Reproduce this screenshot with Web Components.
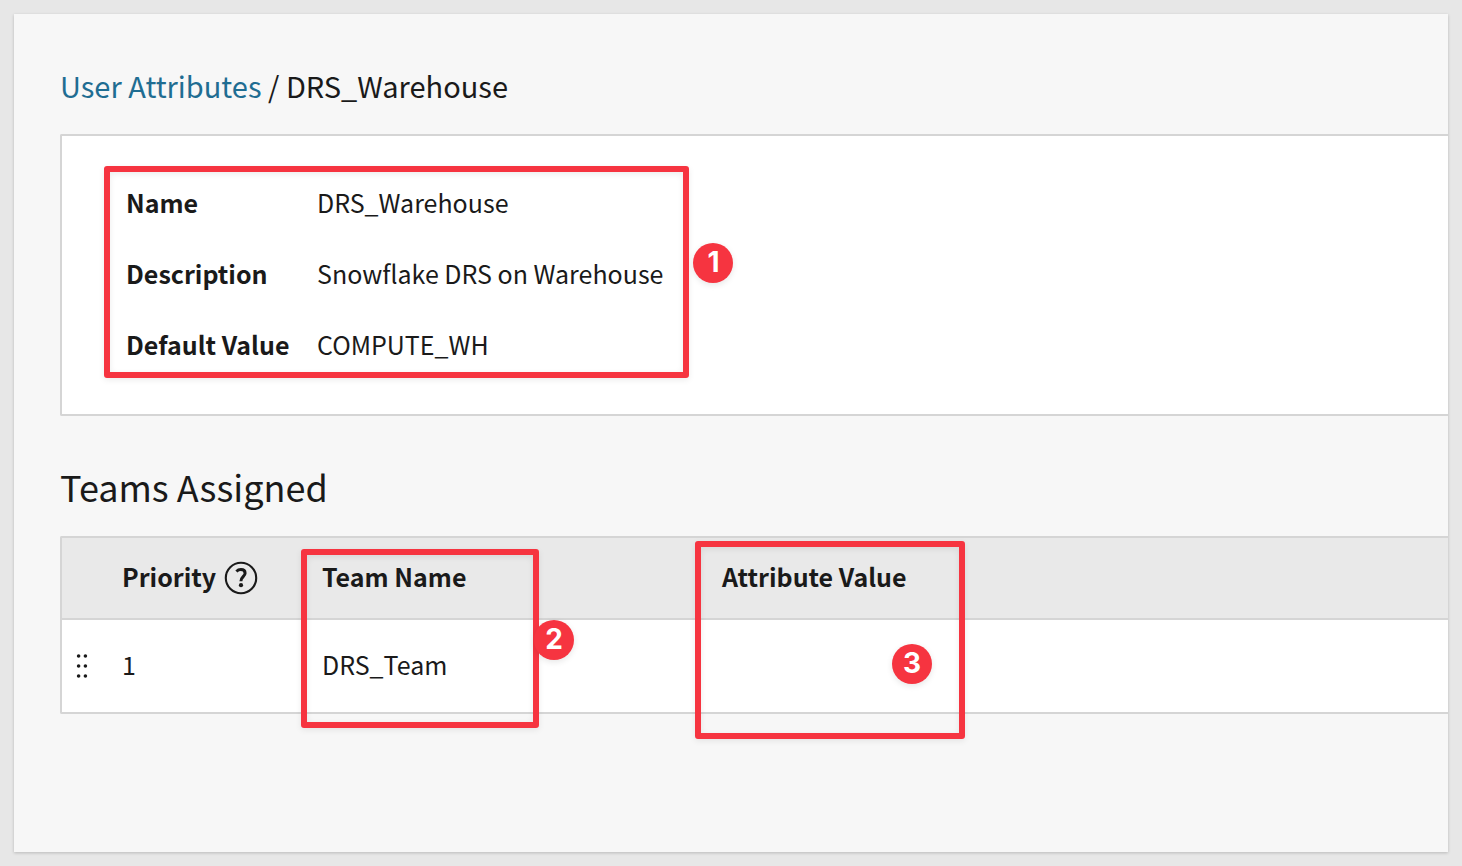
<!DOCTYPE html>
<html lang="en">
<head>
<meta charset="utf-8">
<meta name="viewport" content="width=device-width, initial-scale=1">
<title>User Attributes / DRS_Warehouse</title>
<style>
  body {
    margin: 0;
    background: #e7e7e7;
    color: #1a1a1a;
    font-family: "Noto Sans CJK SC", "Open Sans", sans-serif;
    font-size: 25px;
    line-height: 32px;
  }
</style>
</head>
<body>
<attribute-page>
  <crumb-trail slot="trail" href="#attributes" parent="User Attributes">DRS_Warehouse</crumb-trail>
  <attribute-details>
    <attribute-field label="Name">DRS_Warehouse</attribute-field>
    <attribute-field label="Description">Snowflake DRS on Warehouse</attribute-field>
    <attribute-field label="Default Value">COMPUTE_WH</attribute-field>
  </attribute-details>
  <teams-assigned></teams-assigned>
</attribute-page>

<script>
  function define(name, html, setup) {
    customElements.define(name, class extends HTMLElement {
      constructor() {
        super();
        const template = document.createElement("template");
        template.innerHTML = html;
        this.attachShadow({ mode: "open" }).append(template.content.cloneNode(true));
      }
      connectedCallback() {
        if (setup) setup(this, this.shadowRoot);
      }
    });
  }

  define("attribute-page", `
    <style>
      :host { display: flex; flex-direction: column; box-sizing: border-box; min-height: 100vh; padding: 14px; }
      main {
        flex: 1;
        padding: 51px 0 54px 46px;
        background: #f7f7f7;
        box-shadow: 0 1px 3px rgba(0, 0, 0, .2);
      }
    </style>
    <main><slot name="trail"></slot><slot></slot></main>
  `);

  define("crumb-trail", `
    <style>
      :host { display: block; font-size: 29px; line-height: 40px; }
      a { color: #1f6d92; text-decoration: none; }
    </style>
    <nav aria-label="Breadcrumb"><a></a> / <slot></slot></nav>
  `, (host, root) => {
    const link = root.querySelector("a");
    link.href = host.getAttribute("href");
    link.textContent = host.getAttribute("parent");
  });

  define("callout-frame", `
    <style>
      :host {
        display: block;
        box-sizing: border-box;
        border: 6px solid #f63440;
        border-radius: 3px;
        box-shadow: 0 2px 6px rgba(0, 0, 0, .08), inset 0 2px 6px rgba(0, 0, 0, .08);
      }
    </style>
    <slot></slot>
  `);

  define("callout-badge", `
    <style>
      :host {
        display: block;
        box-sizing: border-box;
        width: 40px;
        height: 40px;
        border-radius: 50%;
        background: #f63440;
        color: #fff;
        font: 700 28px/38px Inter, sans-serif;
        text-align: center;
        box-shadow: 0 2px 6px rgba(0, 0, 0, .1);
      }
    </style>
    <slot></slot>
  `);

  define("attribute-field", `
    <style>
      :host { display: grid; grid-template-columns: 191px auto; }
      b { font-weight: 600; }
    </style>
    <b id="label"></b><span aria-labelledby="label"><slot></slot></span>
  `, (host, root) => {
    root.querySelector("b").textContent = host.getAttribute("label");
  });

  define("attribute-details", `
    <style>
      :host {
        display: block;
        margin-top: 29px;
        padding: 30px 42px 36px;
        border: 2px solid #d5d5d5;
        border-right: 0;
        border-radius: 2px 0 0 2px;
        background: #fff;
      }
      .marked { position: relative; width: fit-content; }
      .fields { display: grid; gap: 39px; padding: 14px 20px 12px 16px; }
      callout-badge { position: absolute; left: calc(100% + 4px); top: 77px; }
    </style>
    <div class="marked">
      <callout-frame><div class="fields"><slot></slot></div></callout-frame>
      <callout-badge>1</callout-badge>
    </div>
  `);

  define("help-button", `
    <style>
      :host { display: block; }
      button { display: block; padding: 0; border: 0; background: none; color: inherit; }
      svg { display: block; }
    </style>
    <button type="button" aria-label="About priority">
      <svg width="34" height="34" viewBox="0 0 34 34" fill="none" stroke="currentColor">
        <circle cx="17" cy="17" r="15.2" stroke-width="2.1"/>
        <path d="M12.4 10.5C13.7 9.2 15.2 8.6 16.9 8.6C19.5 8.6 21.1 10 21.1 12.2C21.1 15.3 16.7 16.2 16.9 20.2" stroke-width="3"/>
        <circle cx="17" cy="24.2" r="2.1" fill="currentColor" stroke="none"/>
      </svg>
    </button>
  `);

  define("drag-handle", `
    <style>
      :host { display: block; }
      button { display: block; padding: 0; border: 0; background: none; color: inherit; cursor: grab; }
      svg { display: block; }
    </style>
    <button type="button" aria-label="Reorder team">
      <svg width="12" height="26" viewBox="0 0 12 26" fill="currentColor">
        <circle cx="2.6" cy="3" r="1.8"/><circle cx="9.4" cy="3" r="1.8"/>
        <circle cx="2.6" cy="13" r="1.8"/><circle cx="9.4" cy="13" r="1.8"/>
        <circle cx="2.6" cy="23" r="1.8"/><circle cx="9.4" cy="23" r="1.8"/>
      </svg>
    </button>
  `);

  define("teams-assigned", `
    <style>
      :host { display: block; }
      h2 { margin: 46px 0 26px; font-size: 36px; font-weight: 400; line-height: 48px; }
      .marked { position: relative; }
      .grid {
        border: 2px solid #d5d5d5;
        border-right: 0;
        border-radius: 2px 0 0 2px;
        background: #fff;
      }
      table { width: 100%; table-layout: fixed; border-collapse: separate; border-spacing: 0; }
      th, td { box-sizing: border-box; padding: 0 0 4px; text-align: left; }
      th { height: 82px; background: #e9e9e9; border-bottom: 2px solid #d5d5d5; font-weight: 600; }
      td { height: 92px; }
      td.handle { padding: 0; }
      .handle { width: 60px; }
      .priority { width: 200px; }
      .team { width: 400px; }
      .with-help { display: flex; align-items: center; gap: 8px; height: 32px; }
      help-button { margin-top: 4px; }
      drag-handle { margin-left: 14px; }
      callout-frame, callout-badge { position: absolute; }
      .team-mark { left: 241px; top: 13px; width: 238px; height: 179px; }
      .team-badge { left: 474px; top: 84px; }
      .value-mark { left: 635px; top: 5px; width: 270px; height: 198px; }
      .value-badge { left: 832px; top: 108px; }
      callout-frame { pointer-events: none; }
    </style>
    <h2 id="title">Teams Assigned</h2>
    <div class="marked">
      <div class="grid">
        <table aria-labelledby="title">
          <thead>
            <tr>
              <th class="handle"></th>
              <th class="priority" scope="col"><div class="with-help">Priority<help-button></help-button></div></th>
              <th class="team" scope="col">Team Name</th>
              <th scope="col">Attribute Value</th>
            </tr>
          </thead>
          <tbody>
            <tr>
              <td class="handle"><drag-handle></drag-handle></td>
              <td>1</td>
              <td>DRS_Team</td>
              <td></td>
            </tr>
          </tbody>
        </table>
      </div>
      <callout-frame class="team-mark"></callout-frame>
      <callout-badge class="team-badge">2</callout-badge>
      <callout-frame class="value-mark"></callout-frame>
      <callout-badge class="value-badge">3</callout-badge>
    </div>
  `);
</script>
</body>
</html>
